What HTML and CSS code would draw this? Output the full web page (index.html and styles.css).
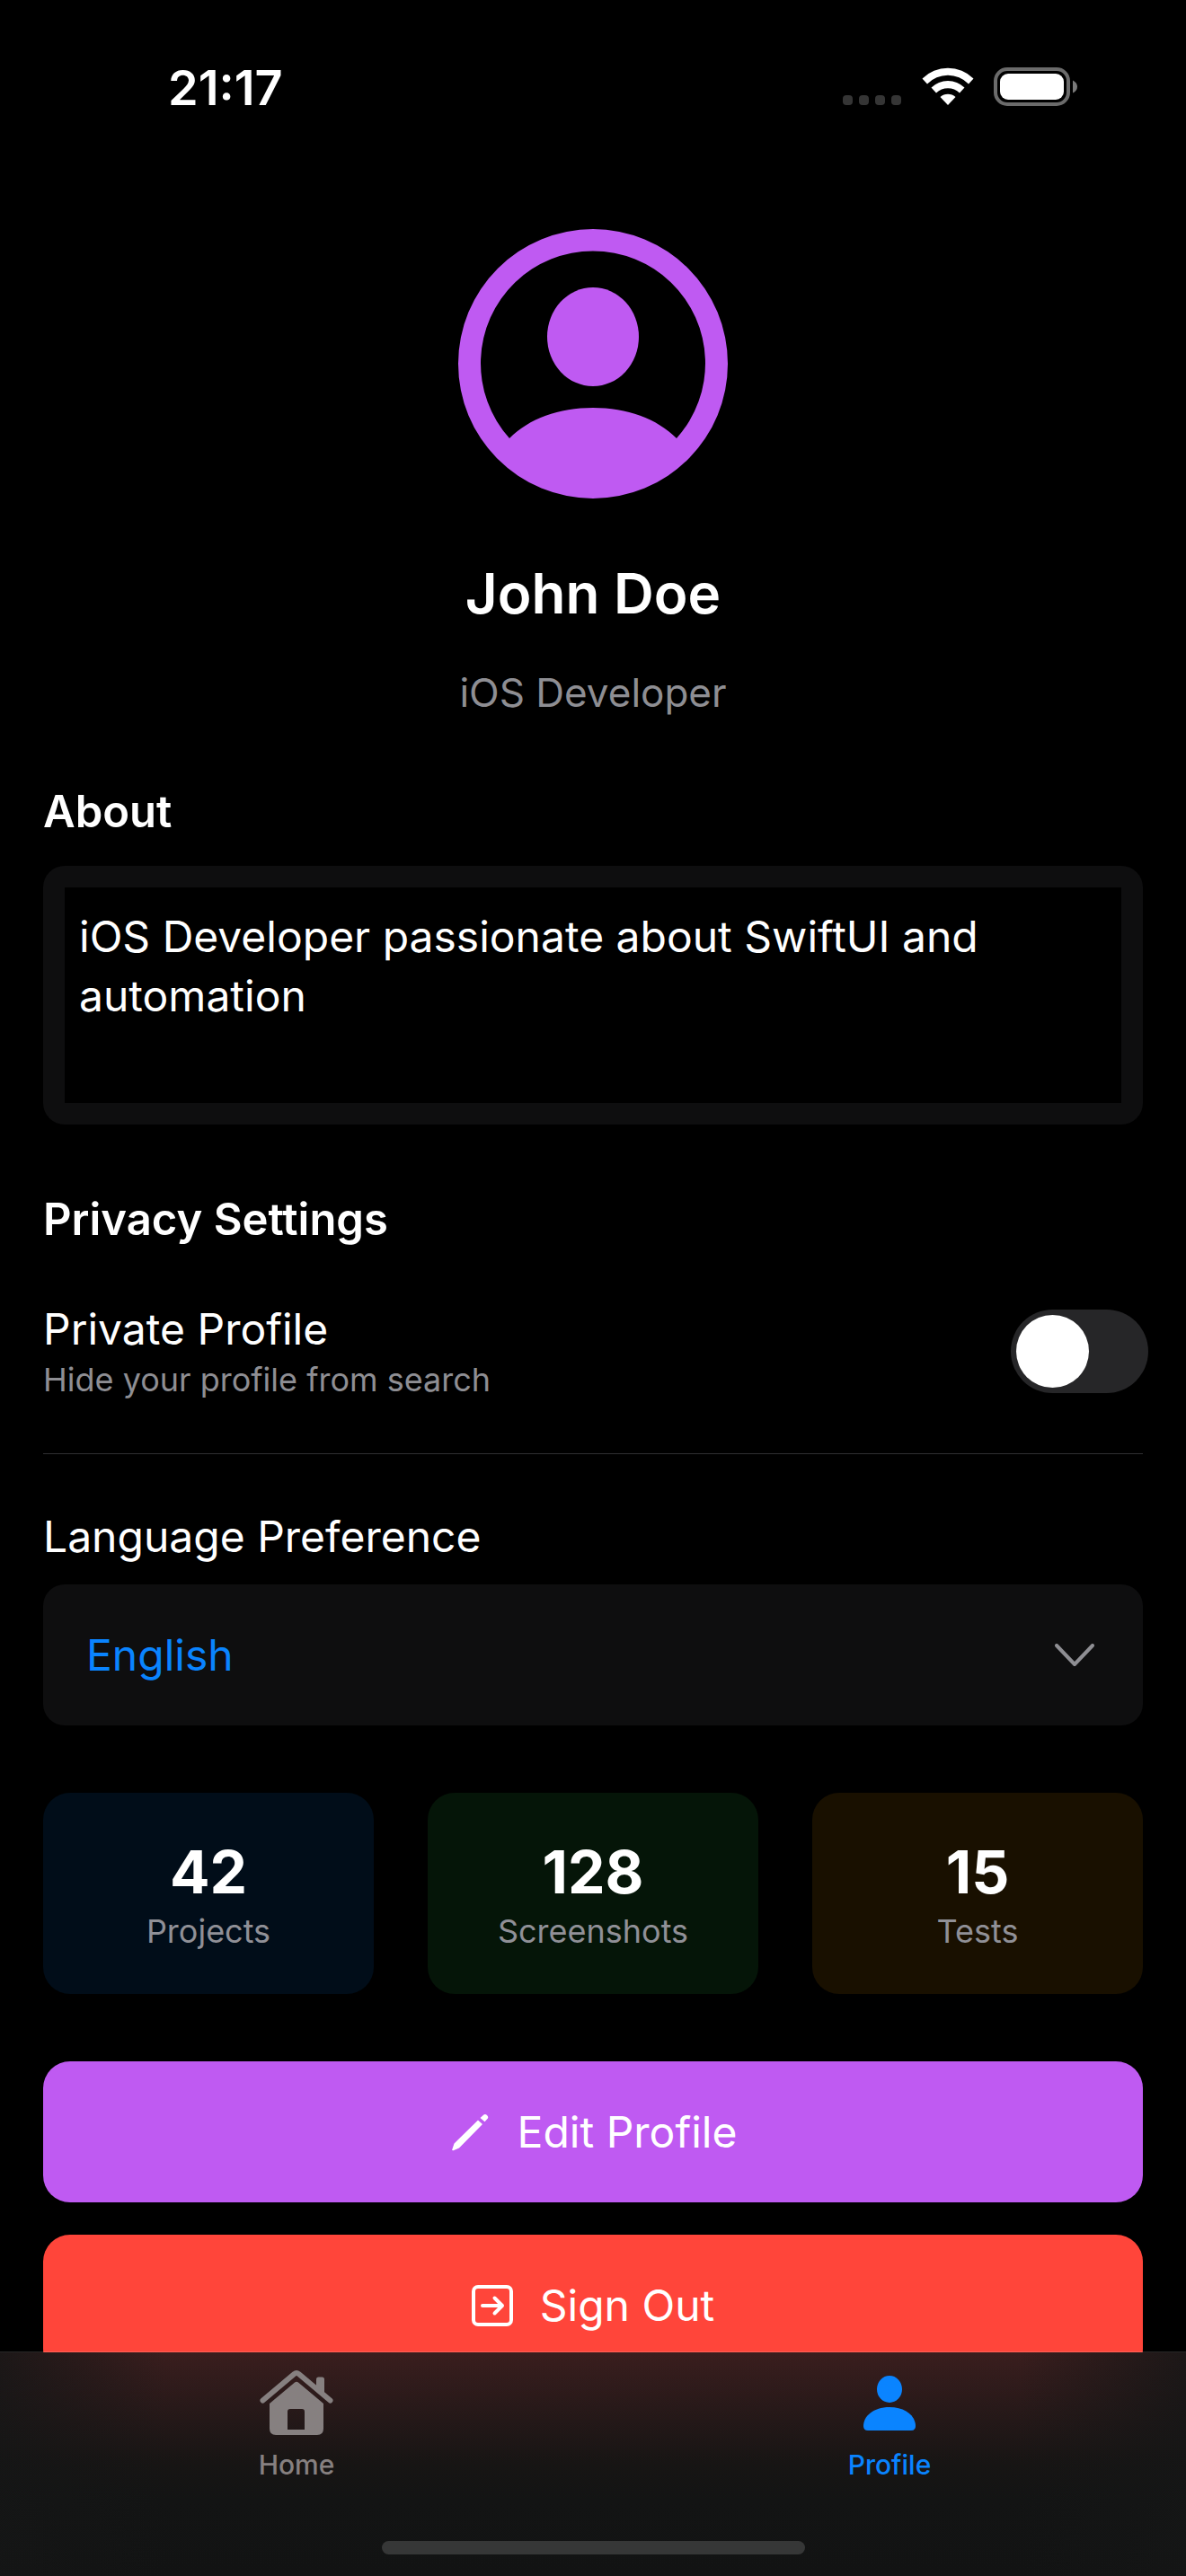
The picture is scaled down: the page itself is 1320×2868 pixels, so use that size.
FILE: index.html
```html
<!DOCTYPE html>
<html lang="en">
<head>
  <meta charset="utf-8">
  <meta name="viewport" content="width=device-width, initial-scale=1">
  <title>Profile</title>
  <link rel="stylesheet" href="styles.css">
</head>
<body>
  <div class="screen">
    <header class="status-bar">
      <time class="clock">21:17</time>
      <div class="status-icons">
        <svg class="cellular" width="66" height="43" viewBox="0 0 66 43" aria-hidden="true">
          <rect x="0" y="31" width="11" height="11" rx="4"/>
          <rect x="18" y="31" width="11" height="11" rx="4"/>
          <rect x="36" y="31" width="11" height="11" rx="4"/>
          <rect x="54" y="31" width="11" height="11" rx="4"/>
        </svg>
        <svg class="wifi" width="58" height="43" viewBox="0 0 58 43" aria-hidden="true">
          <path d="M0.500 12.500A40.500 40.500 0 0 1 57.500 12.500L52 18.500A32 32 0 0 0 6 18.500Z"/>
          <path d="M10.500 22.500A26.500 26.500 0 0 1 47.500 22.500L42 28.500A18.500 18.500 0 0 0 16 28.500Z"/>
          <path d="M20.500 33A13 13 0 0 1 37.500 33L29 42Z"/>
        </svg>
        <svg class="battery" width="94" height="43" viewBox="0 0 94 43" aria-hidden="true">
          <rect class="battery-shell" x="2" y="2" width="81" height="39" rx="13"/>
          <rect x="7" y="7" width="71" height="29" rx="9"/>
          <path class="battery-nub" d="M88 14.500Q93 17 93 21.500T88 28.500Z"/>
        </svg>
      </div>
    </header>

    <main class="content">
      <section class="identity">
        <svg class="avatar" width="300" height="300" viewBox="0 0 300 300" role="img" aria-label="Avatar">
          <path fill-rule="evenodd" d="M150 0A150 150 0 1 1 150 300A150 150 0 1 1 150 0ZM57 233C79 211 112 199 150 199S221 211 243 233A125 125 0 1 0 57 233Z"/>
          <ellipse cx="150" cy="120" rx="51" ry="55"/>
        </svg>
        <h1 class="name">John Doe</h1>
        <p class="role">iOS Developer</p>
      </section>

      <section class="about">
        <label class="heading" for="bio">About</label>
        <div class="editor">
          <textarea id="bio" class="bio" spellcheck="false">iOS Developer passionate about SwiftUI and automation</textarea>
        </div>
      </section>

      <section class="privacy">
        <h2 class="heading">Privacy Settings</h2>
        <div class="setting">
          <label class="setting-text" for="private">
            <span class="body-text">Private Profile</span>
            <span class="caption">Hide your profile from search</span>
          </label>
          <input type="checkbox" role="switch" class="switch" id="private">
        </div>
      </section>

      <section class="language">
        <label class="body-text" for="language">Language Preference</label>
        <div class="picker">
          <select id="language" class="select">
            <option>English</option>
          </select>
          <svg class="chevron" width="44" height="26" viewBox="0 0 44 26" aria-hidden="true">
            <path d="M2 2L22 23L42 2"/>
          </svg>
        </div>
      </section>

      <section class="stats">
        <div class="stat stat-blue"><strong class="number">42</strong><span class="caption">Projects</span></div>
        <div class="stat stat-green"><strong class="number">128</strong><span class="caption">Screenshots</span></div>
        <div class="stat stat-orange"><strong class="number">15</strong><span class="caption">Tests</span></div>
      </section>

      <section class="actions">
        <button type="button" class="action edit">
          <svg width="46" height="46" viewBox="-3 -3 46 46" aria-hidden="true">
            <path d="M0.500 38.500L2.500 32.500L29 6.500L34 11L8 37.500L1.500 40.200Q-0.500 40.500 0.500 38.500Z"/>
            <path d="M31.500 4L34.500 1.200Q37 -1 39.200 1.200T39 5.500L36.500 8.300Z"/>
          </svg>
          Edit Profile
        </button>
        <button type="button" class="action sign-out">
          <svg width="46" height="46" viewBox="0 0 46 46" aria-hidden="true">
            <rect class="line" x="2" y="2" width="42" height="42" rx="5"/>
            <path class="line" d="M12 23H34M25.500 14.500L34 23L25.500 31.500"/>
          </svg>
          Sign Out
        </button>
      </section>
    </main>

    <nav class="tab-bar">
      <div class="tabs">
        <a class="tab" href="#home">
          <svg width="82" height="74" viewBox="0 0 82 74" aria-hidden="true">
            <path class="roof" d="M3.500 34.500L38.500 5Q41 3 43.500 5L78.500 34.500"/>
            <path d="M63 11Q63 8.500 65.500 8.500H69.500Q72 8.500 72 11V28L63 20Z"/>
            <path fill-rule="evenodd" d="M11 38L39 14.500Q41 13 43 14.500L71 38V66Q71 73 64 73H18Q11 73 11 66ZM31 67H50V47Q50 44 47 44H34Q31 44 31 47Z"/>
          </svg>
          Home
        </a>
        <a class="tab active" href="#profile" aria-current="page">
          <svg width="82" height="74" viewBox="0 0 82 74" aria-hidden="true">
            <ellipse cx="41" cy="22" rx="14" ry="15"/>
            <path d="M12 63C12 52 23 42 41 42S70 52 70 63Q70 68 65 68H17Q12 68 12 63Z"/>
          </svg>
          Profile
        </a>
      </div>
      <div class="home-indicator"></div>
    </nav>
  </div>
</body>
</html>
```
FILE: styles.css
```css
* {
  box-sizing: border-box;
}

body {
  margin: 0;
  background: #000;
  color: #fff;
  font-family: Inter, "Liberation Sans", sans-serif;
  font-size: 48px;
  line-height: 64px;
}

h1,
h2,
p {
  margin: 0;
}

svg {
  display: block;
  flex: none;
  fill: currentColor;
}

.screen {
  height: 100vh;
  display: flex;
  flex-direction: column;
  overflow: hidden;
}

/* Status bar */
.status-bar {
  flex: none;
  display: flex;
  justify-content: space-between;
  padding: 68px 120px 0 187px;
}

.clock {
  font-size: 54px;
  font-weight: 600;
  line-height: 60px;
}

.status-icons {
  display: flex;
  gap: 22px;
  padding-top: 7px;
}

.cellular {
  color: #353535;
}

.battery-shell {
  fill: none;
  stroke: #6b6b6b;
  stroke-width: 4;
}

.battery-nub {
  fill: #7a7a7a;
}

/* Scrolling content */
.content {
  flex: 1;
  min-height: 0;
  overflow: hidden;
  padding: 127px 48px 0;
}

.identity {
  display: flex;
  flex-direction: column;
  align-items: center;
  text-align: center;
}

.avatar {
  color: #bf5af2;
}

.name {
  margin-top: 66px;
  font-size: 62px;
  font-weight: 600;
  line-height: 80px;
}

.role {
  margin-top: 42px;
  color: #8e8e93;
  font-size: 44px;
  line-height: 56px;
}

.heading {
  display: block;
  font-size: 49px;
  font-weight: 600;
  line-height: 60px;
}

.body-text {
  display: block;
}

.caption {
  color: #8e8e93;
  font-size: 36px;
  line-height: 48px;
}

.about {
  margin-top: 75px;
}

.editor {
  margin-top: 30px;
  padding: 24px;
  border-radius: 24px;
  background: #0e0e0f;
}

.bio {
  display: block;
  width: 100%;
  height: 240px;
  padding: 22px 16px;
  border: 0;
  outline: 0;
  resize: none;
  background: #000;
  color: #fff;
  font: inherit;
  line-height: 66px;
}

.privacy {
  margin-top: 76px;
  border-bottom: 1px solid #303032;
}

.setting {
  display: flex;
  align-items: center;
  justify-content: space-between;
  margin-top: 60px;
  padding-bottom: 58px;
}

.setting-text {
  display: flex;
  flex-direction: column;
}

.switch {
  appearance: none;
  flex: none;
  width: 153px;
  height: 93px;
  margin: 0 -6px 0 0;
  padding: 6px;
  border-radius: 47px;
  background: #262628;
}

.switch::before {
  content: "";
  display: block;
  width: 81px;
  height: 81px;
  border-radius: 50%;
  background: #fff;
}

.switch:checked {
  background: #30d158;
}

.switch:checked::before {
  margin-left: auto;
}

.language {
  margin-top: 60px;
}

.picker {
  display: grid;
  align-items: center;
  margin-top: 21px;
}

.picker > * {
  grid-area: 1 / 1;
}

.select {
  appearance: none;
  width: 100%;
  height: 157px;
  padding: 0 48px;
  border: 0;
  border-radius: 24px;
  background: #0e0e0f;
  color: #0a84ff;
  font: inherit;
}

.chevron {
  justify-self: end;
  margin-right: 54px;
  pointer-events: none;
}

.chevron path {
  fill: none;
  stroke: #8e8e93;
  stroke-width: 4;
  stroke-linecap: round;
  stroke-linejoin: round;
}

.stats {
  display: grid;
  grid-template-columns: repeat(3, 1fr);
  gap: 60px;
  margin-top: 75px;
}

.stat {
  display: flex;
  flex-direction: column;
  align-items: center;
  gap: 2px;
  padding: 48px 0 46px;
  border-radius: 30px;
}

.stat .caption {
  color: #909097;
}

.stat-blue {
  background: #010d19;
}

.stat-green {
  background: #051508;
}

.stat-orange {
  background: #191000;
}

.number {
  font-size: 66px;
  font-weight: 700;
  line-height: 80px;
}

.actions {
  display: flex;
  flex-direction: column;
  gap: 36px;
  margin-top: 75px;
}

.action {
  display: flex;
  align-items: center;
  justify-content: center;
  gap: 30px;
  height: 157px;
  padding: 0;
  border: 0;
  border-radius: 30px;
  color: #fff;
  font: inherit;
}

.edit {
  background: #bf5af2;
}

.sign-out {
  background: #ff453a;
}

.line,
.roof {
  fill: none;
  stroke: currentColor;
  stroke-width: 4;
  stroke-linecap: round;
  stroke-linejoin: round;
}

.roof {
  stroke-width: 6;
}

/* Tab bar: its hairline lies over the last row of the content */
.tab-bar {
  position: relative;
  flex: none;
  margin-top: -1px;
  padding-top: 19px;
  border-top: 1px solid #ffffff26;
  background:
    linear-gradient(90deg, #151616cc, #15161600 14%, #15161600 86%, #151616cc),
    linear-gradient(#3a1e1e, #241818 30%, #171514 50%, #131414 66%, #121313);
  background-clip: padding-box;
}

.tabs {
  display: grid;
  grid-template-columns: 1fr 1fr;
}

.tab {
  display: flex;
  flex-direction: column;
  align-items: center;
  gap: 12px;
  color: #868080;
  font-size: 30px;
  font-weight: 500;
  line-height: 40px;
  text-decoration: none;
}

.active {
  color: #0a84ff;
}

.home-indicator {
  width: 471px;
  height: 15px;
  margin: 65px auto 24px;
  border-radius: 8px;
  background: #363737;
}
```
